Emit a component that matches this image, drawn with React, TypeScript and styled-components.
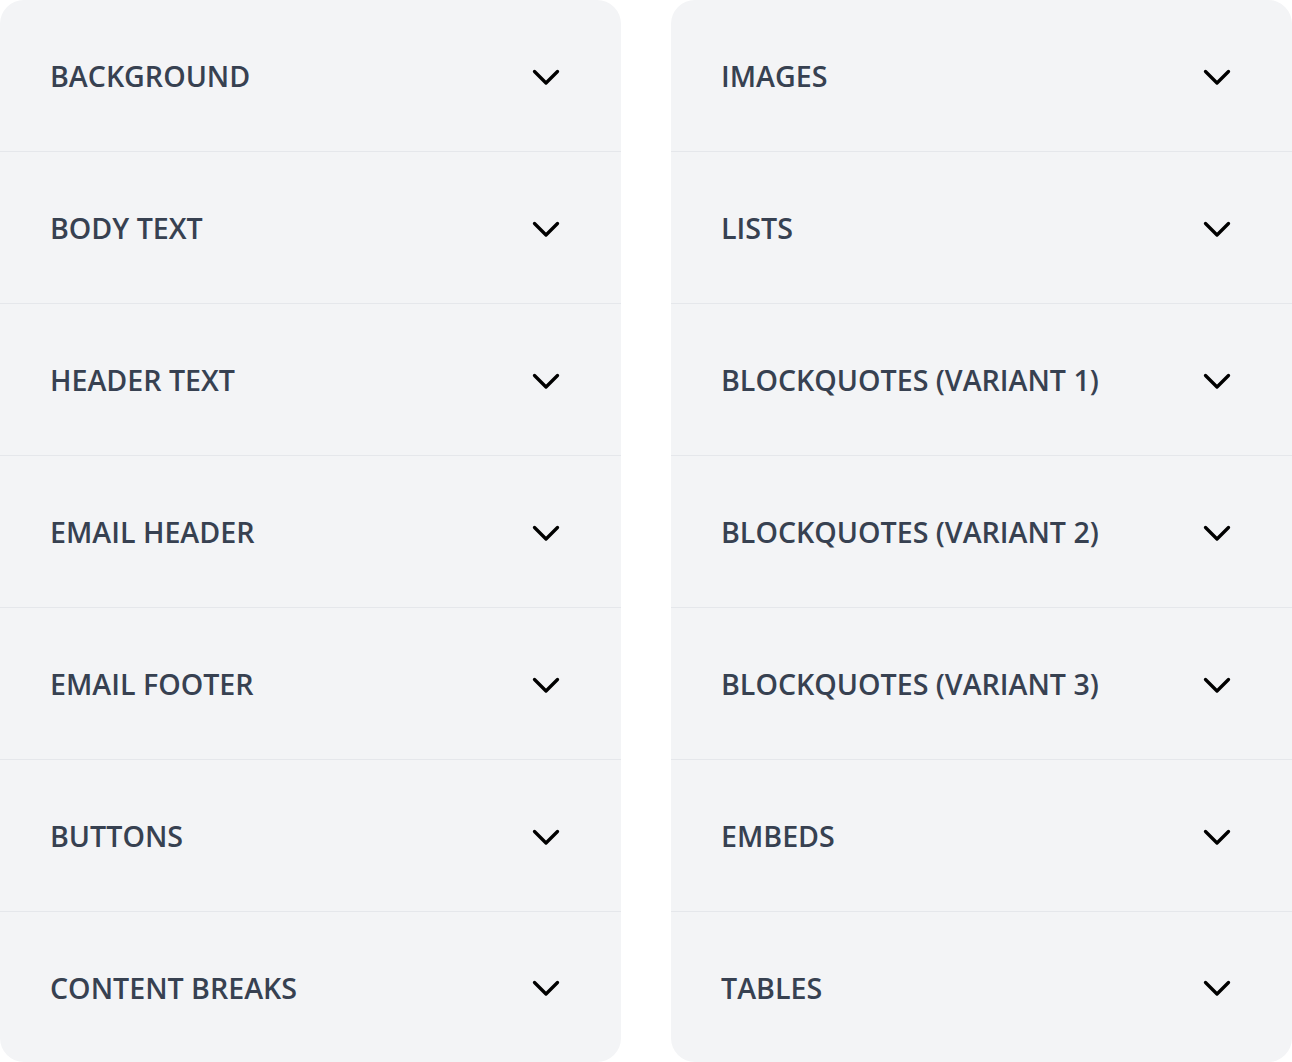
import styled, {createGlobalStyle} from 'styled-components';

const GlobalStyle = createGlobalStyle`
  html, body {
    margin: 0;
    padding: 0;
    background: #ffffff;
  }
`;

const left = ['Background', 'Body text', 'Header text', 'Email header', 'Email footer', 'Buttons', 'Content breaks'];
const right = ['Images', 'Lists', 'Blockquotes (variant 1)', 'Blockquotes (variant 2)', 'Blockquotes (variant 3)', 'Embeds', 'Tables'];

const Chevron = () => (
    <svg width="28" height="18" viewBox="0 0 28 18" fill="none">
        <polyline points="2.5,3.5 14,15 25.5,3.5" stroke="#000" strokeWidth="3.3" strokeLinecap="round" strokeLinejoin="round"/>
    </svg>
);

const Panel = ({items}: { items: string[] }) => (
    <StyledPanel>
        {items.map(item => (
            <Row key={item}>
                <Label>{item}</Label>
                <Toggle type="button" aria-label={`Expand ${item}`}>
                    <Chevron/>
                </Toggle>
            </Row>
        ))}
    </StyledPanel>
);

export default function App() {
    return (
        <>
            <GlobalStyle/>
            <Grid>
                <Panel items={left}/>
                <Panel items={right}/>
            </Grid>
        </>
    );
}

const Grid = styled.div`
  display: grid;
  grid-template-columns: 621px 621px;
  column-gap: 50px;
  width: 1292px;
  align-items: start;
`;

const StyledPanel = styled.div`
  display: flex;
  flex-direction: column;
  background-color: #f3f4f6;
  border-radius: 24px;
  overflow: hidden;
`;

const Row = styled.div`
  display: flex;
  align-items: center;
  justify-content: space-between;
  height: 152px;
  padding: 2px 61px 0 50px;
  box-sizing: border-box;
  border-bottom: 1px solid #e5e7eb;

  &:last-child {
    border-bottom: none;
    height: 150px;
  }
`;

const Label = styled.span`
  font-family: "Open Sans", "Noto Sans", sans-serif;
  font-size: 28.6px;
  font-weight: 600;
  color: #374151;
  text-transform: uppercase;
  line-height: 1;
`;

const Toggle = styled.button`
  display: flex;
  align-items: center;
  justify-content: center;
  padding: 0;
  margin: 0;
  border: none;
  background: none;
  cursor: pointer;
`;
